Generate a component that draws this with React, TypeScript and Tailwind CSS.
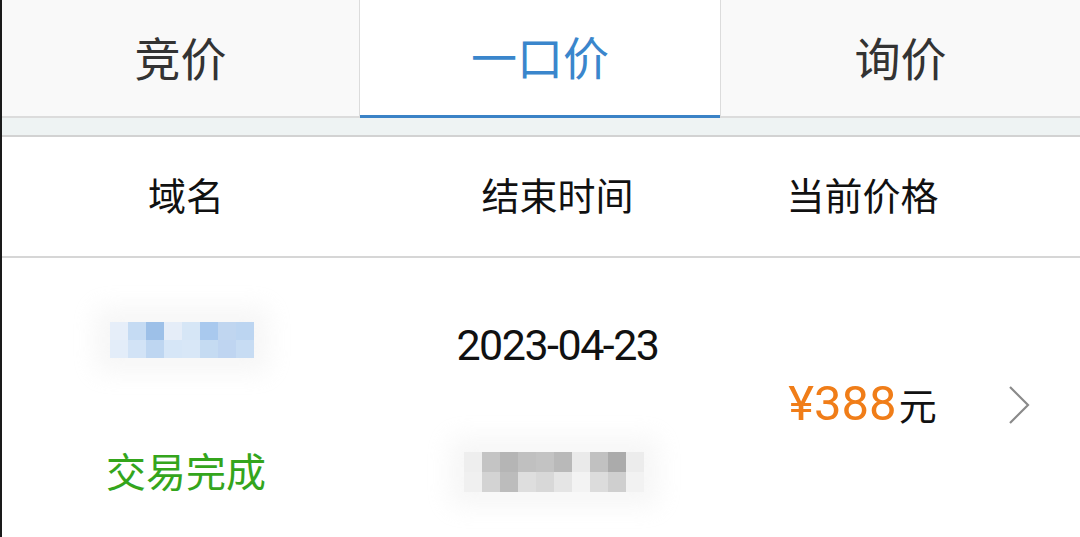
import React from "react";

const cjk = { fontFamily: '"Noto Sans CJK SC", "Noto Sans", sans-serif' };
const num = { fontFamily: 'Roboto, "Noto Sans CJK SC", sans-serif' };

const blueBlur = [
  ["#e6eef9", "#c5dbf3", "#9dc0e8", "#e5edf8", "#d6e6f6", "#a9c9ee", "#c0d6f0", "#bcd5f1"],
  ["#e3edf9", "#d2e3f6", "#bed6f1", "#d6e6f7", "#d8e7f7", "#c5dbf2", "#bfd5f1", "#c7dcf3"],
];

const greyBlur = [
  ["#eeeeee", "#c4c4c4", "#b5b5b5", "#c0c0c0", "#c3c3c3", "#b9b9b9", "#eaeaea", "#c1c1c1", "#ababab", "#ececec"],
  ["#f0f0f0", "#d3d3d3", "#bcbcbc", "#dedede", "#d8d8d8", "#e5e5e5", "#f3f3f3", "#dcdcdc", "#cfcfcf", "#f2f2f2"],
];

// pixelated mosaic standing in for censored text
const Mosaic = ({ rows, cell, rowH }: { rows: string[][]; cell: number; rowH: number }) => (
  <div className="flex flex-col shadow-[0_0_24px_14px_rgba(240,240,240,0.6)]">
    {rows.map((r, i) => (
      <div key={i} className="flex">
        {r.map((c, j) => (
          <div key={j} style={{ background: c, width: cell, height: rowH }} />
        ))}
      </div>
    ))}
  </div>
);

const App = () => {
  return (
    <div className="w-[1080px] h-[537px] overflow-hidden bg-white border-l-2 border-[#1a1a1a] flex flex-col" style={cjk}>
      {/* tabs */}
      <div className="flex h-[118px]">
        <div className="w-[358px] flex items-center justify-center bg-[#f9f9f9] border-b-2 border-r border-[#dcdcdc] pb-1 text-[46px] text-[#333]">
          竞价
        </div>
        <div className="w-[360px] flex items-center justify-center bg-white border-b-[3px] border-[#3a82c6] pb-1 text-[46px] text-[#3a86cc]">
          一口价
        </div>
        <div className="flex-1 flex items-center justify-center bg-[#f9f9f9] border-b-2 border-l border-[#dcdcdc] pb-1 text-[46px] text-[#333]">
          询价
        </div>
      </div>
      <div className="h-[19px] bg-[#eef3f3] border-b-2 border-[#d2d2d2]" />

      {/* header */}
      <div className="flex h-[121px] items-center border-b-2 border-[#d6d6d6] pb-[6px] text-[38px] text-[#111]">
        <div className="w-[368px] text-center">域名</div>
        <div className="w-[375px] text-center">结束时间</div>
        <div className="w-[235px] text-center">当前价格</div>
      </div>

      {/* row */}
      <div className="flex flex-1">
        <div className="w-[368px] flex flex-col items-center pt-[64px]">
          <div className="ml-[-8px]">
            <Mosaic rows={blueBlur} cell={18} rowH={18} />
          </div>
          <div className="mt-[92px] text-[40px] leading-none text-[#34a51c]">交易完成</div>
        </div>
        <div className="w-[375px] flex flex-col items-center pt-[66px]">
          <div className="text-[43px] leading-none tracking-[-1.5px] text-[#111]" style={num}>
            2023-04-23
          </div>
          <div className="mt-[85px] ml-[-8px]">
            <Mosaic rows={greyBlur} cell={18} rowH={20} />
          </div>
        </div>
        <div className="w-[235px] flex items-center justify-center pt-[12px]">
          <span className="text-[49px] leading-none text-[#f07d18]" style={num}>¥388</span>
          <span className="text-[38px] leading-none text-[#111] ml-[2px]">元</span>
        </div>
        <div className="flex-1 flex items-center pl-[28px] pt-[14px]">
          <svg width="24" height="40" viewBox="0 0 24 40" fill="none">
            <path d="M2 2 L20 20 L2 38" stroke="#8a8a8a" strokeWidth="2.2" />
          </svg>
        </div>
      </div>
    </div>
  );
};

export default App;
